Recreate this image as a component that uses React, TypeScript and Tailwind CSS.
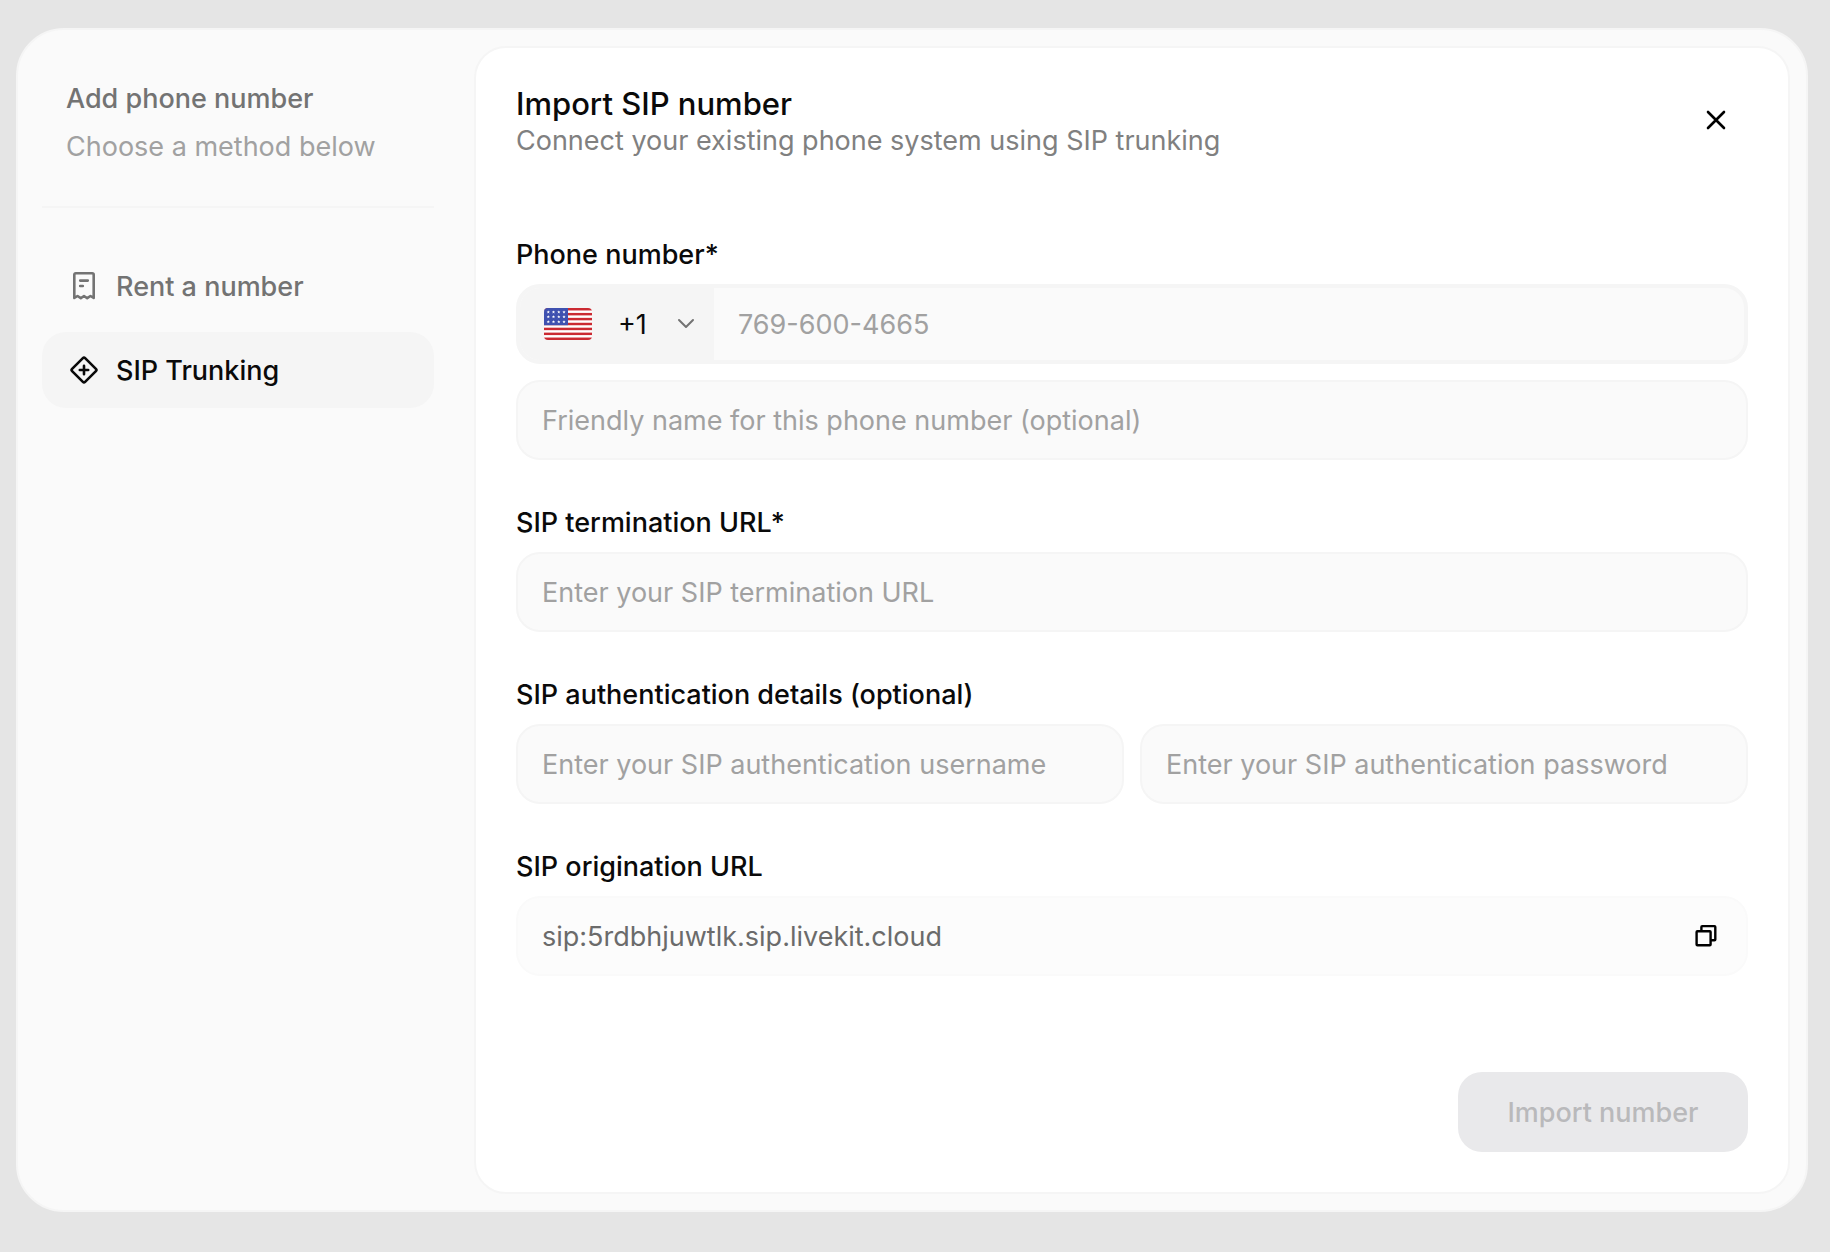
import { useState } from 'react'
import type { ReactNode } from 'react'
import clsx from 'clsx'

const ORIGINATION_URL = 'sip:5rdbhjuwtlk.sip.livekit.cloud'

const inputClass =
  'h-20 w-full min-w-0 rounded-3xl border-2 border-neutral-100 bg-neutral-50 px-6 text-[27px] text-neutral-950 outline-none placeholder:text-[#a1a1a1]'

function ReceiptIcon() {
  return (
    <svg className="size-9 shrink-0" viewBox="0 0 36 36" fill="none" stroke="currentColor" strokeWidth="2.6" strokeLinecap="round" strokeLinejoin="round" aria-hidden="true">
      <path d="M8.3 30V6.8Q8.3 5.3 9.8 5.3H26.2Q27.7 5.3 27.7 6.8V30L24.5 28L21.2 30.2L18 28L14.8 30.2L11.5 28Z" />
      <path d="M14.2 12.6H21.8M14.2 18H16.8" />
    </svg>
  )
}

function TrunkIcon() {
  return (
    <svg className="size-9 shrink-0" viewBox="0 0 36 36" fill="none" stroke="currentColor" strokeWidth="2.6" strokeLinecap="round" strokeLinejoin="round" aria-hidden="true">
      <path d="M16.9 6.1Q18 5 19.1 6.1L29.9 16.9Q31 18 29.9 19.1L19.1 29.9Q18 31 16.9 29.9L6.1 19.1Q5 18 6.1 16.9Z" />
      <path d="M18 13.8V22.2M13.8 18H22.2" />
    </svg>
  )
}

function CloseIcon() {
  return (
    <svg className="size-6" viewBox="0 0 24 24" fill="none" stroke="currentColor" strokeWidth="2.6" strokeLinecap="round" aria-hidden="true">
      <path d="M4 4L20 20M20 4L4 20" />
    </svg>
  )
}

function ChevronIcon({ className }: { className?: string }) {
  return (
    <svg className={className} viewBox="0 0 24 24" fill="none" stroke="currentColor" strokeWidth="2" strokeLinecap="round" strokeLinejoin="round" aria-hidden="true">
      <path d="M5 8L12 15L19 8" />
    </svg>
  )
}

function CopyIcon() {
  return (
    <svg className="size-7" viewBox="0 0 28 28" fill="none" stroke="currentColor" strokeWidth="2.4" strokeLinejoin="round" aria-hidden="true">
      <rect x="4.6" y="9.2" width="14" height="14" rx="0.8" />
      <path d="M9.4 9.2V4.9Q9.4 4.1 10.2 4.1H22.5Q23.3 4.1 23.3 4.9V17.4Q23.3 18.2 22.5 18.2H18.6" />
    </svg>
  )
}

function UsFlag({ className }: { className?: string }) {
  const stripes = [0, 2, 4, 6, 8, 10, 12]
  const stars = [4.3, 9.5, 14.8, 20].flatMap(x => [4, 8.8, 13.8].map(y => ({ x, y })))
  return (
    <svg className={className} viewBox="0 0 48 32" aria-hidden="true">
      <rect width="48" height="32" fill="#fff" />
      {stripes.map(i => (
        <rect key={i} y={(i * 32) / 13} width="48" height={32 / 13} fill="#cb2a32" />
      ))}
      <rect width="24" height="17.2" fill="#3f51b0" />
      {stars.map(({ x, y }) => (
        <path key={`${x}-${y}`} d={`M${x} ${y - 1.5}l.5 1h1.1l-.9.7.4 1.2-1.1-.7-1.1.7.4-1.2-.9-.7h1.1z`} fill="#fff" />
      ))}
    </svg>
  )
}

function FieldLabel({ htmlFor, children }: { htmlFor: string; children: ReactNode }) {
  return (
    <label htmlFor={htmlFor} className="text-[27px] leading-[38px] font-medium text-neutral-950">
      {children}
    </label>
  )
}

export default function App() {
  const [method, setMethod] = useState('sip')

  const methods = [
    { id: 'rent', label: 'Rent a number', icon: <ReceiptIcon /> },
    { id: 'sip', label: 'SIP Trunking', icon: <TrunkIcon /> }
  ]

  return (
    <div className="flex min-h-screen bg-[#e5e5e5] pt-7 pr-[22px] pb-10 pl-4 font-[Inter,sans-serif]">
      <div role="dialog" aria-labelledby="dialog-title" className="flex flex-1 rounded-[48px] border-2 border-neutral-100 bg-neutral-50 py-4 pr-4">
        {/* Sidebar */}
        <aside className="w-[456px] shrink-0 pr-10 pl-6">
          <div className="border-b-2 border-neutral-100 px-6 pt-[33px] pb-[39px]">
            <h2 className="text-[27px] leading-10 font-medium text-[#737373]">Add phone number</h2>
            <p className="mt-2 text-[27px] leading-10 text-[#a1a1a1]">Choose a method below</p>
          </div>
          <nav className="mt-10 flex flex-col gap-2">
            {methods.map(item => (
              <button
                key={item.id}
                type="button"
                onClick={() => setMethod(item.id)}
                className={clsx(
                  'flex h-[76px] items-center gap-3.5 rounded-3xl px-6 text-[27px] font-medium',
                  method === item.id ? 'bg-neutral-100 text-neutral-950' : 'text-[#737373]'
                )}
              >
                {item.icon}
                <span className="pt-0.5">{item.label}</span>
              </button>
            ))}
          </nav>
        </aside>

        {/* Form panel */}
        <main className="flex min-w-0 flex-1 flex-col rounded-[32px] border-2 border-neutral-100 bg-white p-10">
          <header className="flex items-start justify-between">
            <div>
              <h1 id="dialog-title" className="text-[31px] leading-8 font-medium text-neutral-950">Import SIP number</h1>
              <p className="text-[27px] leading-[42px] text-[#808080]">Connect your existing phone system using SIP trunking</p>
            </div>
            <button type="button" aria-label="Close" className="flex size-16 items-center justify-center text-black">
              <CloseIcon />
            </button>
          </header>

          <form className="mt-[74px] flex flex-1 flex-col gap-11" onSubmit={e => e.preventDefault()}>
            <div className="flex flex-col gap-2.5">
              <FieldLabel htmlFor="phone">Phone number*</FieldLabel>
              <div className="flex flex-col gap-4">
                <div className="flex h-20 overflow-hidden rounded-3xl border-4 border-neutral-100 bg-neutral-50">
                  <div className="relative w-[194px] shrink-0 bg-neutral-100">
                    <select aria-label="Country code" className="size-full appearance-none pt-0.5 pl-[98px] text-[27px] text-neutral-950 outline-none">
                      <option>+1</option>
                    </select>
                    <UsFlag className="pointer-events-none absolute top-5 left-6 h-8 w-12 rounded-[4px]" />
                    <ChevronIcon className="pointer-events-none absolute top-6 right-4 size-6 text-[#737373]" />
                  </div>
                  <input id="phone" type="tel" placeholder="769-600-4665" className="min-w-0 flex-1 px-6 pt-0.5 text-[27px] text-neutral-950 outline-none placeholder:text-[#a1a1a1]" />
                </div>
                <input type="text" aria-label="Friendly name" placeholder="Friendly name for this phone number (optional)" className={inputClass} />
              </div>
            </div>

            <div className="flex flex-col gap-2.5">
              <FieldLabel htmlFor="termination">SIP termination URL*</FieldLabel>
              <input id="termination" type="text" placeholder="Enter your SIP termination URL" className={inputClass} />
            </div>

            <div className="flex flex-col gap-2.5">
              <FieldLabel htmlFor="username">SIP authentication details (optional)</FieldLabel>
              <div className="grid grid-cols-2 gap-4">
                <input id="username" type="text" placeholder="Enter your SIP authentication username" className={inputClass} />
                <input type="password" aria-label="SIP authentication password" placeholder="Enter your SIP authentication password" className={inputClass} />
              </div>
            </div>

            <div className="flex flex-col gap-2.5">
              <FieldLabel htmlFor="origination">SIP origination URL</FieldLabel>
              <div className="flex h-20 items-center rounded-3xl border-2 border-[#fafafa] bg-[#fcfcfc] pr-3.5 pl-6">
                <input id="origination" type="text" readOnly value={ORIGINATION_URL} className="min-w-0 flex-1 pt-0.5 text-[27px] text-[#6b6b6b] outline-none" />
                <button
                  type="button"
                  aria-label="Copy origination URL"
                  onClick={() => navigator.clipboard?.writeText(ORIGINATION_URL)}
                  className="flex size-[52px] items-center justify-center text-black"
                >
                  <CopyIcon />
                </button>
              </div>
            </div>

            <div className="mt-auto flex justify-end">
              <button type="submit" disabled className="h-20 min-w-[290px] rounded-3xl bg-[#e9e9eb] px-12 pt-0.5 text-[27px] font-medium text-[#b9b9bb]">
                Import number
              </button>
            </div>
          </form>
        </main>
      </div>
    </div>
  )
}
